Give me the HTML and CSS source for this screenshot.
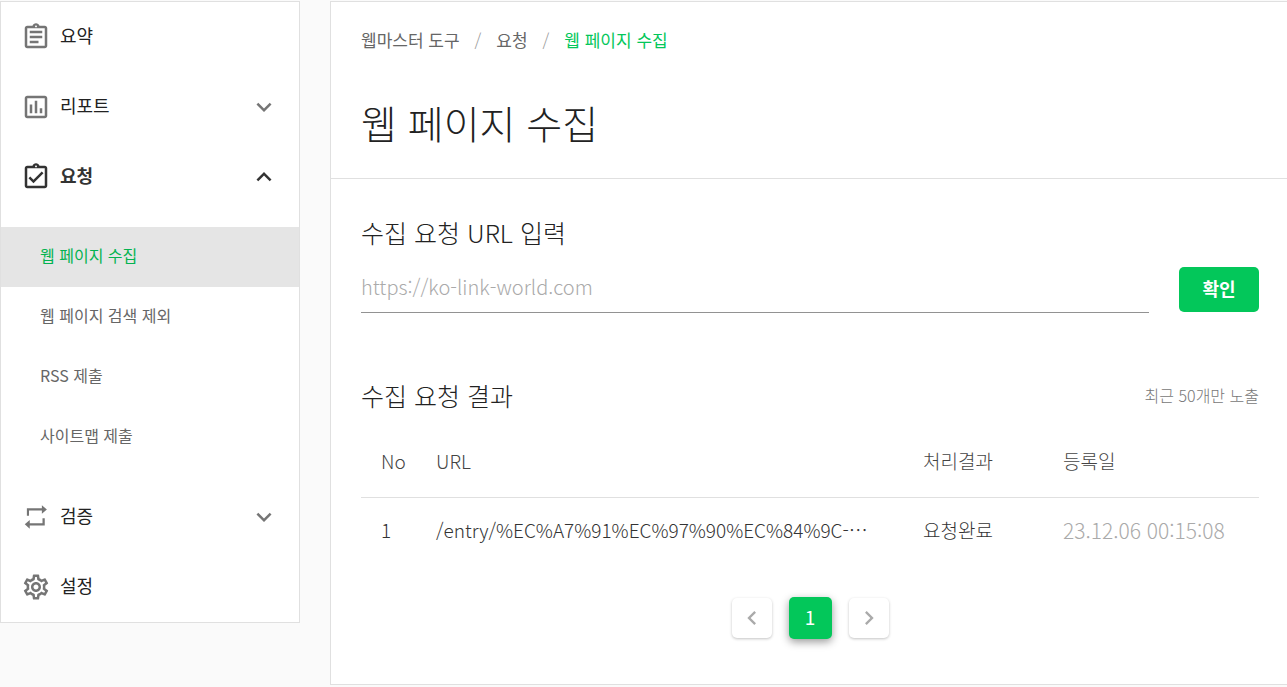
FILE: index.html
```html
<!DOCTYPE html>
<html lang="ko">
<head>
    <title>웹 페이지 수집</title>
    <meta charset="UTF-8">
    <meta name="viewport" content="width=device-width, initial-scale=1">
    <link rel="stylesheet" href="styles.css">
</head>
<body>
    <div class="layout">
        <nav class="sidebar">
            <a class="menu-item" href="#">
                <svg class="icon" viewBox="0 0 24 24"><path d="M7 15h7v2H7zm0-4h10v2H7zm0-4h10v2H7zm12-4h-4.180C14.400 1.840 13.300 1 12 1s-2.400.840-2.820 2H5c-1.100 0-2 .9-2 2v14c0 1.100.9 2 2 2h14c1.100 0 2-.9 2-2V5c0-1.100-.9-2-2-2zm-7-.250c.410 0 .750.340.750.750s-.340.750-.750.750-.750-.340-.750-.750.340-.750.750-.750zM19 19H5V5h14v14z"/></svg>
                <span>요약</span>
            </a>
            <a class="menu-item" href="#">
                <svg class="icon" viewBox="0 0 24 24"><path d="M19 3H5c-1.100 0-2 .9-2 2v14c0 1.100.9 2 2 2h14c1.100 0 2-.9 2-2V5c0-1.100-.9-2-2-2zm0 16H5V5h14v14zM7 10h2v7H7zm4-3h2v10h-2zm4 6h2v4h-2z"/></svg>
                <span>리포트</span>
                <svg class="icon arrow" viewBox="0 0 24 24"><path d="M16.590 8.590L12 13.170 7.410 8.590 6 10l6 6 6-6z"/></svg>
            </a>
            <a class="menu-item open" href="#">
                <svg class="icon" viewBox="0 0 24 24"><path d="M19 3h-4.180C14.400 1.840 13.300 1 12 1s-2.400.840-2.820 2H5c-1.100 0-2 .9-2 2v14c0 1.100.9 2 2 2h14c1.100 0 2-.9 2-2V5c0-1.100-.9-2-2-2zm-7-.250c.410 0 .750.340.750.750s-.340.750-.750.750-.750-.340-.750-.750.340-.750.750-.750zM19 19H5V5h14v14z"/><path d="M17.990 9l-1.410-1.420-6.590 6.590-2.580-2.570-1.420 1.410 4 3.990z"/></svg>
                <span>요청</span>
                <svg class="icon arrow" viewBox="0 0 24 24"><path d="M12 8l-6 6 1.410 1.410L12 10.830l4.590 4.580L18 14z"/></svg>
            </a>
            <div class="submenu">
                <a class="active" href="#">웹 페이지 수집</a>
                <a href="#">웹 페이지 검색 제외</a>
                <a href="#">RSS 제출</a>
                <a href="#">사이트맵 제출</a>
            </div>
            <a class="menu-item" href="#">
                <svg class="icon" viewBox="0 0 24 24"><path d="M4.700 11V5H16.700V2.500L20.700 5.900 16.700 9.400V6.800H6.400V11zM19 13V18.800H7V21.300L3 17.800 7 14.300V17H17.200V13z"/></svg>
                <span>검증</span>
                <svg class="icon arrow" viewBox="0 0 24 24"><path d="M16.590 8.590L12 13.170 7.410 8.590 6 10l6 6 6-6z"/></svg>
            </a>
            <a class="menu-item" href="#">
                <svg class="icon" viewBox="0 0 24 24"><path d="M19.430 12.980c.04-.32.07-.64.07-.98 0-.34-.03-.66-.07-.98l2.110-1.650c.19-.15.24-.42.12-.64l-2-3.460c-.09-.16-.26-.25-.44-.25-.06 0-.12.01-.17.03l-2.490 1c-.52-.4-1.080-.73-1.690-.98l-.38-2.650C14.460 2.180 14.250 2 14 2h-4c-.25 0-.46.18-.49.42l-.38 2.650c-.61.25-1.170.59-1.690.98l-2.490-1c-.06-.02-.12-.03-.18-.03-.17 0-.34.09-.43.25l-2 3.460c-.13.22-.07.49.12.64l2.110 1.650c-.04.32-.07.65-.07.98 0 .33.03.66.07.98l-2.110 1.650c-.19.15-.24.42-.12.64l2 3.460c.09.16.26.25.44.25.06 0 .12-.01.17-.03l2.490-1c.52.4 1.080.73 1.690.98l.38 2.650c.03.24.24.42.49.42h4c.25 0 .46-.18.49-.42l.38-2.650c.61-.25 1.170-.59 1.690-.98l2.490 1c.06.02.12.03.18.03.17 0 .34-.09.43-.25l2-3.460c.12-.22.07-.49-.12-.64l-2.110-1.650zm-1.980-1.710c.04.31.05.52.05.73 0 .21-.02.43-.05.73l-.14 1.130.89.7 1.080.84-.7 1.210-1.270-.51-1.040-.42-.9.68c-.43.32-.84.56-1.250.73l-1.060.43-.16 1.130-.2 1.350h-1.400l-.19-1.350-.16-1.130-1.060-.43c-.43-.18-.83-.41-1.230-.71l-.91-.7-1.060.43-1.270.51-.7-1.210 1.080-.84.89-.7-.14-1.130c-.03-.31-.05-.54-.05-.74s.02-.43.05-.73l.14-1.130-.89-.7-1.080-.84.7-1.210 1.270.51 1.040.42.9-.68c.43-.32.84-.56 1.250-.73l1.060-.43.16-1.130.2-1.350h1.390l.19 1.350.16 1.130 1.060.43c.43.18.83.41 1.230.71l.91.7 1.060-.43 1.270-.51.7 1.210-1.070.85-.89.7.14 1.130zM12 8c-2.210 0-4 1.790-4 4s1.790 4 4 4 4-1.790 4-4-1.790-4-4-4zm0 6c-1.100 0-2-.9-2-2s.9-2 2-2 2 .9 2 2-.9 2-2 2z"/></svg>
                <span>설정</span>
            </a>
        </nav>

        <main class="content">
            <header class="page-header">
                <div class="breadcrumb">
                    <a href="#">웹마스터 도구</a>
                    <span class="divider">/</span>
                    <a href="#">요청</a>
                    <span class="divider">/</span>
                    <a class="current" href="#">웹 페이지 수집</a>
                </div>
                <h1>웹 페이지 수집</h1>
            </header>

            <form class="request-form">
                <label for="url">수집 요청 URL 입력</label>
                <div class="form-row">
                    <input type="text" id="url" placeholder="https://ko-link-world.com">
                    <button type="button">확인</button>
                </div>
            </form>

            <section class="result">
                <div class="result-header">
                    <h2>수집 요청 결과</h2>
                    <span class="note">최근 50개만 노출</span>
                </div>
                <table>
                    <thead>
                        <tr>
                            <th class="col-no">No</th>
                            <th class="col-url">URL</th>
                            <th class="col-status">처리결과</th>
                            <th class="col-date">등록일</th>
                        </tr>
                    </thead>
                    <tbody>
                        <tr>
                            <td>1</td>
                            <td>/entry/%EC%A7%91%EC%97%90%EC%84%9C-⋯</td>
                            <td>요청완료</td>
                            <td class="date">23.12.06 00:15:08</td>
                        </tr>
                    </tbody>
                </table>
                <div class="pagination">
                    <button type="button" aria-label="이전"><svg viewBox="0 0 24 24"><path d="M15.410 7.410L14 6l-6 6 6 6 1.410-1.410L10.830 12z"/></svg></button>
                    <button type="button" class="page">1</button>
                    <button type="button" aria-label="다음"><svg viewBox="0 0 24 24"><path d="M10 6L8.590 7.410 13.170 12l-4.580 4.590L10 18l6-6z"/></svg></button>
                </div>
            </section>
        </main>
    </div>
</body>
</html>
```
FILE: styles.css
```css
* {
    box-sizing: border-box;
}
body {
    margin: 0;
    background-color: #fafafa;
    color: #222;
    font-family: "Noto Sans CJK KR", sans-serif;
    font-weight: 300;
}
a {
    color: inherit;
    text-decoration: none;
}
button, input {
    font-family: inherit;
}
.layout {
    display: flex;
    align-items: flex-start;
    gap: 30px;
    padding: 1px 0 2px;
}

/* sidebar */
.sidebar {
    flex: none;
    width: 300px;
    border: 1px solid #e0e0e0;
    background-color: #fff;
}
.menu-item {
    display: flex;
    align-items: center;
    gap: 9px;
    height: 70px;
    padding: 0 20px;
    font-size: 18px;
    line-height: 24px;
    font-weight: 400;
}
.menu-item span {
    padding-bottom: 4px;
}
.icon {
    width: 30px;
    height: 30px;
    fill: #757575;
}
.arrow {
    margin-left: auto;
}
.open {
    font-weight: 700;
    color: #333;
}
.open .icon {
    fill: #333;
}
.submenu {
    padding: 15px 0;
}
.submenu a {
    display: block;
    height: 60px;
    padding-left: 39px;
    font-size: 16px;
    line-height: 56px;
    font-weight: 400;
    color: #666;
}
.submenu .active {
    background-color: #e5e5e5;
    color: #03b350;
}

/* content */
.content {
    flex: 1;
    min-width: 0;
    border: 1px solid #e0e0e0;
    border-right: 0;
    background-color: #fff;
}
.page-header {
    padding: 26px 30px;
    border-bottom: 1px solid #e0e0e0;
}
.breadcrumb {
    display: flex;
    gap: 15px;
    font-size: 17px;
    line-height: 24px;
    font-weight: 400;
    color: #666;
}
.divider {
    font-weight: 300;
    color: #999;
}
.current {
    color: #03c75a;
}
h1 {
    margin: 40px 0 0;
    font-size: 39px;
    line-height: 60px;
    font-weight: 300;
}
h2, .request-form label {
    display: block;
    margin: 0;
    font-size: 25px;
    line-height: 36px;
    font-weight: 300;
}
.request-form {
    padding: 35px 28px 0 30px;
}
.form-row {
    display: flex;
    gap: 30px;
    margin-top: 17px;
}
.form-row input {
    flex: 1;
    min-width: 0;
    height: 46px;
    padding: 0 0 6px;
    border: 0;
    border-bottom: 1px solid #929292;
    background: none;
    font-size: 20px;
    font-weight: 300;
    color: #222;
    outline: none;
}
.form-row input::placeholder {
    color: #aaa;
}
.form-row button {
    width: 80px;
    height: 45px;
    padding: 0 0 4px;
    border: 0;
    border-radius: 5px;
    background-color: #03c75a;
    color: #fff;
    font-size: 18px;
    font-weight: 700;
    cursor: pointer;
}
.result {
    padding: 64px 28px 45px 30px;
}
.result-header {
    display: flex;
    align-items: center;
    justify-content: space-between;
}
.note {
    font-size: 16px;
    line-height: 24px;
    color: #777;
}
table {
    width: 100%;
    margin-top: 14px;
    border-collapse: collapse;
    table-layout: fixed;
    font-size: 19px;
    line-height: 28px;
}
th, td {
    height: 70px;
    padding: 0;
    text-align: left;
    font-weight: 300;
    white-space: nowrap;
}
th {
    padding-bottom: 2px;
    border-bottom: 1px solid #e0e0e0;
    color: #444;
}
td {
    height: 66px;
    color: #333;
}
th:first-child, td:first-child {
    padding-left: 20px;
}
.col-no {
    width: 75px;
}
.col-status {
    width: 140px;
}
.col-date {
    width: 196px;
}
.date {
    font-size: 21px;
    color: #aaa;
}
.pagination {
    display: flex;
    align-items: center;
    justify-content: center;
    gap: 17px;
    margin-top: 34px;
}
.pagination button {
    display: flex;
    align-items: center;
    justify-content: center;
    width: 40px;
    height: 40px;
    padding: 0;
    border: 0;
    border-radius: 5px;
    background-color: #fff;
    box-shadow: 0 1px 3px rgba(0, 0, 0, 0.24);
    cursor: pointer;
}
.pagination svg {
    width: 28px;
    height: 28px;
    fill: #aaa;
}
.pagination .page {
    width: 43px;
    height: 42px;
    padding-bottom: 4px;
    background-color: #03c75a;
    box-shadow: 0 3px 8px rgba(0, 0, 0, 0.4);
    color: #fff;
    font-size: 19px;
}
```
